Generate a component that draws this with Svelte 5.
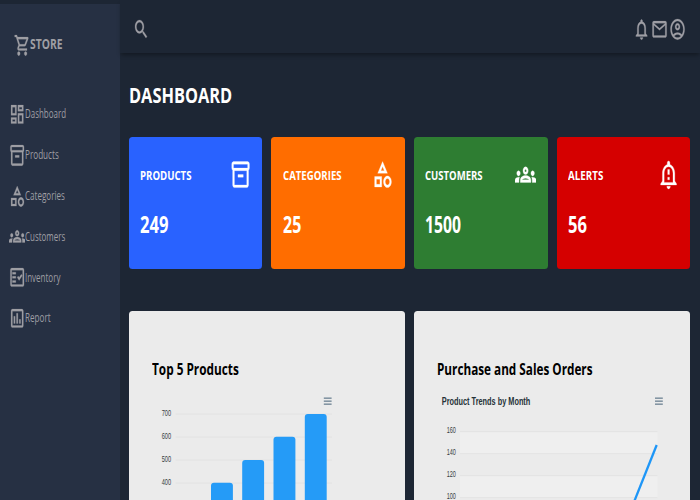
<script>
  const icons = {
    cart: 'M15.55 13c.75 0 1.41-.41 1.75-1.03l3.58-6.49c.37-.66-.11-1.48-.87-1.48H5.21l-.94-2H1v2h2l3.6 7.59-1.35 2.44C4.52 15.37 5.48 17 7 17h12v-2H7l1.1-2h7.45zM6.16 6h12.15l-2.76 5H8.53L6.16 6zM7 18c-1.1 0-1.99.9-1.99 2S5.9 22 7 22s2-.9 2-2-.9-2-2-2zm10 0c-1.1 0-1.99.9-1.99 2s.89 2 1.99 2 2-.9 2-2-.9-2-2-2z',
    dashboard: 'M19 5v2h-4V5h4M9 5v6H5V5h4m10 8v6h-4v-6h4M9 17v2H5v-2h4M21 3h-8v6h8V3zM11 3H3v10h8V3zm10 8h-8v10h8V11zm-10 4H3v6h8v-6z',
    products: 'M20 2H4c-1 0-2 .9-2 2v3.01c0 .72.43 1.34 1 1.69V20c0 1.1 1.1 2 2 2h14c.9 0 2-.9 2-2V8.7c.57-.35 1-.97 1-1.69V4c0-1.1-1-2-2-2zm-1 18H5V9h14v11zm1-13H4V4h16v3zM9 12h6v2H9z',
    categories: 'M12 2l-5.5 9h11L12 2zm0 3.84L13.93 9h-3.87L12 5.84zM17.5 13c-2.49 0-4.5 2.01-4.5 4.5s2.01 4.5 4.5 4.5 4.5-2.01 4.5-4.5-2.01-4.5-4.5-4.5zm0 7c-1.38 0-2.5-1.12-2.5-2.5s1.12-2.5 2.5-2.5 2.5 1.12 2.5 2.5-1.12 2.5-2.5 2.5zM3 21.5h8v-8H3v8zm2-6h4v4H5v-4z',
    customers: 'M4 13c1.1 0 2-.9 2-2s-.9-2-2-2-2 .9-2 2 .9 2 2 2zm1.13 1.1c-.37-.06-.74-.1-1.13-.1-.99 0-1.93.21-2.78.58C.48 14.9 0 15.62 0 16.43V18h4.5v-1.61c0-.83.23-1.61.63-2.29zM20 13c1.1 0 2-.9 2-2s-.9-2-2-2-2 .9-2 2 .9 2 2 2zm4 3.43c0-.81-.48-1.53-1.22-1.85-.85-.37-1.79-.58-2.78-.58-.39 0-.76.04-1.13.1.4.68.63 1.46.63 2.29V18H24v-1.57zm-7.76-2.78c-1.17-.52-2.61-.9-4.24-.9-1.63 0-3.07.39-4.24.9C6.68 14.13 6 15.21 6 16.39V18h12v-1.61c0-1.18-.68-2.26-1.76-2.74zM8.07 16c.09-.23.13-.39.91-.69.97-.38 1.99-.56 3.02-.56s2.05.18 3.02.56c.77.3.81.46.91.69H8.07zM12 8c.55 0 1 .45 1 1s-.45 1-1 1-1-.45-1-1 .45-1 1-1m0-2c-1.66 0-3 1.34-3 3s1.34 3 3 3 3-1.34 3-3-1.34-3-3-3z',
    inventory: 'M20 3H4c-1.1 0-2 .9-2 2v14c0 1.1.9 2 2 2h16c1.1 0 2-.9 2-2V5c0-1.1-.9-2-2-2zm0 16H4V5h16v14zM19.41 10.42L17.99 9l-3.17 3.17-1.41-1.42L12 12.16 14.82 15zM5 7h5v2H5zM5 11h5v2H5zM5 15h5v2H5z',
    report: 'M19 3H5c-1.1 0-2 .9-2 2v14c0 1.1.9 2 2 2h14c1.1 0 2-.9 2-2V5c0-1.1-.9-2-2-2zm0 16H5V5h14v14zM7 10h2v7H7zm4-3h2v10h-2zm4 6h2v4h-2z',
    search: 'M15.5 14h-.79l-.28-.27C15.41 12.59 16 11.11 16 9.5 16 5.91 13.09 3 9.5 3S3 5.91 3 9.5 5.91 16 9.5 16c1.61 0 3.09-.59 4.23-1.57l.27.28v.79l5 4.99L20.49 19l-4.99-5zm-6 0C7.01 14 5 11.99 5 9.5S7.01 5 9.5 5 14 7.01 14 9.5 11.99 14 9.5 14z',
    bell: 'M12 22c1.1 0 2-.9 2-2h-4c0 1.1.9 2 2 2zm6-6v-5c0-3.07-1.63-5.64-4.5-6.32V4c0-.83-.67-1.5-1.5-1.5s-1.5.67-1.5 1.5v.68C7.64 5.36 6 7.92 6 11v5l-2 2v1h16v-1l-2-2zm-2 1H8v-6c0-2.48 1.51-4.5 4-4.5s4 2.02 4 4.5v6z',
    mail: 'M22 6c0-1.1-.9-2-2-2H4c-1.1 0-2 .9-2 2v12c0 1.1.9 2 2 2h16c1.1 0 2-.9 2-2V6zm-2 0l-8 5-8-5h16zm0 12H4V8l8 5 8-5v10z',
    account: 'M12 2C6.48 2 2 6.48 2 12s4.48 10 10 10 10-4.48 10-10S17.52 2 12 2zM7.35 18.5C8.66 17.56 10.26 17 12 17s3.34.56 4.65 1.5c-1.31.94-2.91 1.5-4.65 1.5s-3.34-.56-4.65-1.5zm10.79-1.38C16.45 15.8 14.32 15 12 15s-4.45.8-6.14 2.12C4.7 15.73 4 13.95 4 12c0-4.42 3.58-8 8-8s8 3.58 8 8c0 1.95-.7 3.73-1.86 5.12zM12 6c-1.93 0-3.5 1.57-3.5 3.5S10.07 13 12 13s3.5-1.57 3.5-3.5S13.93 6 12 6zm0 5c-.83 0-1.5-.67-1.5-1.5S11.17 8 12 8s1.5.67 1.5 1.5S12.83 11 12 11z',
    alert: 'M10.01 21.01c0 1.1.89 1.99 1.99 1.99s1.99-.89 1.99-1.99h-3.98zM12 6c2.76 0 5 2.24 5 5v7H7v-7c0-2.76 2.24-5 5-5zm0-4.5c-.83 0-1.5.67-1.5 1.5v1.17C7.36 4.85 5 7.65 5 11v6l-2 2v1h18v-1l-2-2v-6c0-3.35-2.36-6.15-5.5-6.83V3c0-.83-.67-1.5-1.5-1.5zM11 8h2v4h-2zm0 6h2v2h-2z',
  };

  const nav = [
    { label: 'Dashboard', icon: 'dashboard', width: 41 },
    { label: 'Products', icon: 'products', width: 33.8 },
    { label: 'Categories', icon: 'categories', width: 39.8 },
    { label: 'Customers', icon: 'customers', width: 40.2 },
    { label: 'Inventory', icon: 'inventory', width: 35.4 },
    { label: 'Report', icon: 'report', width: 25.6 },
  ];

  const cards = [
    { title: 'PRODUCTS', value: '249', icon: 'products', color: '#2962ff', titleWidth: 51.5, valueWidth: 28.5 },
    { title: 'CATEGORIES', value: '25', icon: 'categories', color: '#ff6d00', titleWidth: 58.6, valueWidth: 18.3 },
    { title: 'CUSTOMERS', value: '1500', icon: 'customers', color: '#2e7d32', titleWidth: 57.6, valueWidth: 36 },
    { title: 'ALERTS', value: '56', icon: 'alert', color: '#d50000', titleWidth: 35.3, valueWidth: 19 },
  ];

  const barTicks = [700, 600, 500, 400];
  const bars = [
    { x: 82, y: 171.8 },
    { x: 113.2, y: 148.9 },
    { x: 144.5, y: 125.8 },
    { x: 175.8, y: 103.1 },
  ];
  const lineTicks = [160, 140, 120, 100];

  // Condenses a line of text horizontally to the given width.
  function fit(node, width) {
    node.style.transform = `scaleX(${width / node.getBoundingClientRect().width})`;
  }
</script>

{#snippet icon(name)}
  <svg class="icon" viewBox="0 0 24 24" preserveAspectRatio="none" aria-hidden="true"><path d={icons[name]} /></svg>
{/snippet}

{#snippet menu(x)}
  <g class="menu">
    <rect {x} y="86.4" width="7.8" height="1.6" />
    <rect {x} y="89.4" width="7.8" height="1.6" />
    <rect {x} y="92.4" width="7.8" height="1.6" />
  </g>
{/snippet}

<div class="page">
  <aside>
    <div class="brand">{@render icon('cart')}<span class="fit" use:fit={32.5}>STORE</span></div>
    <nav>
      {#each nav as item}
        <div class="item">{@render icon(item.icon)}<span class="fit" use:fit={item.width}>{item.label}</span></div>
      {/each}
    </nav>
  </aside>

  <div class="content">
    <header>
      {@render icon('search')}
      <div class="actions">
        {@render icon('bell')}
        {@render icon('mail')}
        {@render icon('account')}
      </div>
    </header>

    <main>
      <h1><span class="fit" use:fit={103.2}>DASHBOARD</span></h1>

      <section class="cards">
        {#each cards as card}
          <article class="card" style:background={card.color}>
            <div class="card-head">
              <h3><span class="fit" use:fit={card.titleWidth}>{card.title}</span></h3>
              {@render icon(card.icon)}
            </div>
            <div class="value"><span class="fit" use:fit={card.valueWidth}>{card.value}</span></div>
          </article>
        {/each}
      </section>

      <section class="charts">
        <article class="panel">
          <h2><span class="fit" use:fit={86.8}>Top 5 Products</span></h2>
          <svg class="chart" viewBox="0 0 276.5 189.5">
            {#each barTicks as tick, i}
              <line x1="46.5" x2="203" y1={103 + i * 23} y2={103 + i * 23} />
              <text x="32.7" y={104.8 + i * 22.9} textLength="9.4" lengthAdjust="spacingAndGlyphs">{tick}</text>
            {/each}
            {#each bars as bar}
              <rect class="bar" x={bar.x} y={bar.y} width="21.9" height="120" rx="3" />
            {/each}
            {@render menu(194.8)}
          </svg>
        </article>
        <article class="panel">
          <h2><span class="fit" use:fit={155.5}>Purchase and Sales Orders</span></h2>
          <svg class="chart" viewBox="0 0 276.5 189.5">
            <rect class="band" x="46" y="120.7" width="197.5" height="22" />
            <rect class="band" x="46" y="164.7" width="197.5" height="22" />
            {#each lineTicks as tick, i}
              <line x1="46" x2="243.5" y1={120.7 + i * 22} y2={120.7 + i * 22} />
              <text x="32.7" y={122.4 + i * 22} textLength="9.2" lengthAdjust="spacingAndGlyphs">{tick}</text>
            {/each}
            <text class="subtitle" x="27.8" y="93.9" textLength="88.5" lengthAdjust="spacingAndGlyphs">Product Trends by Month</text>
            <path class="trend" d="M218.8 194 L242.7 134" />
            {@render menu(241)}
          </svg>
        </article>
      </section>
    </main>
  </div>
</div>

<style>
  :global(body) {
    margin: 0;
    overflow: hidden;
  }
  .page {
    display: flex;
    width: 700px;
    height: 500px;
    overflow: hidden;
    background: #1d2634;
    color: #fff;
    font-family: 'Open Sans', 'Noto Sans', sans-serif;
  }
  .fit {
    display: inline-block;
    white-space: nowrap;
    transform-origin: 0 50%;
  }
  .icon {
    display: block;
    flex: none;
    width: 16.4px;
    height: 24.7px;
    fill: currentColor;
    stroke: currentColor;
    stroke-width: 0.25;
  }
  h1, h2, h3 {
    margin: 0;
    font-weight: 700;
  }

  aside {
    flex: none;
    box-sizing: border-box;
    width: 120px;
    margin-top: 4px;
    padding-top: 28.5px;
    background: #263043;
    color: #9e9ea4;
  }
  .brand {
    display: flex;
    align-items: center;
    height: 25px;
    padding-left: 13.5px;
    margin-bottom: 36.4px;
    font-size: 14px;
    font-weight: 700;
    line-height: 22px;
  }
  .brand .fit {
    margin-top: -3px;
  }
  .item {
    display: flex;
    align-items: center;
    width: 110px;
    height: 40.8px;
    padding-left: 9px;
    font-size: 12px;
    line-height: 20px;
  }
  .item .fit {
    margin-top: 0.2px;
  }

  .content {
    flex: 1;
    min-width: 0;
  }
  header {
    display: flex;
    align-items: center;
    justify-content: space-between;
    box-sizing: border-box;
    height: 52.5px;
    padding: 7px 13.5px 0 12.8px;
    box-shadow: 0 3px 4px -1px rgba(0, 0, 0, 0.35);
    color: #9e9ea4;
  }
  .actions {
    display: flex;
    gap: 1px;
  }
  .actions .icon {
    width: 17.1px;
  }

  main {
    padding: 30.2px 9.7px 0 8.7px;
  }
  h1 {
    font-size: 20.6px;
    line-height: 24px;
  }
  .cards {
    display: grid;
    grid-template-columns: repeat(4, 1fr);
    gap: 8.9px;
    margin-top: 30px;
  }
  .card {
    box-sizing: border-box;
    height: 132.8px;
    padding: 22.4px 11.5px 0 11.5px;
    border-radius: 3.5px;
  }
  .card-head {
    display: flex;
    align-items: center;
    justify-content: space-between;
  }
  .card-head .icon {
    width: 21.2px;
    height: 31.2px;
  }
  .card h3 {
    width: 80px;
    font-size: 12.8px;
    line-height: 20px;
  }
  .value {
    margin-top: 21px;
    font-size: 22.3px;
    font-weight: 700;
    line-height: 28px;
  }

  .charts {
    display: grid;
    grid-template-columns: 1fr 1fr;
    gap: 8.9px;
    margin-top: 41.7px;
  }
  .panel {
    display: grid;
    height: 195px;
    overflow: hidden;
    border-radius: 3.5px;
    background: #ebebeb;
    color: #000;
  }
  .panel h2 {
    grid-area: 1 / 1;
    padding: 46.5px 0 0 23px;
    font-size: 15.5px;
    line-height: 22px;
  }
  .chart {
    grid-area: 1 / 1;
    width: 276.5px;
    height: 189.5px;
  }
  .chart line {
    stroke: #e0e0e0;
    stroke-width: 0.8;
  }
  .chart text {
    fill: #373d3f;
    font: 8.2px 'Liberation Sans', Arial, sans-serif;
  }
  .chart .subtitle {
    font-size: 10px;
    font-weight: 700;
    fill: #263238;
  }
  .bar {
    fill: #259bf7;
  }
  .band {
    fill: #efefef;
  }
  .trend {
    fill: none;
    stroke: #1e96f7;
    stroke-width: 2.3;
  }
  .menu {
    fill: #8495a3;
  }
</style>
